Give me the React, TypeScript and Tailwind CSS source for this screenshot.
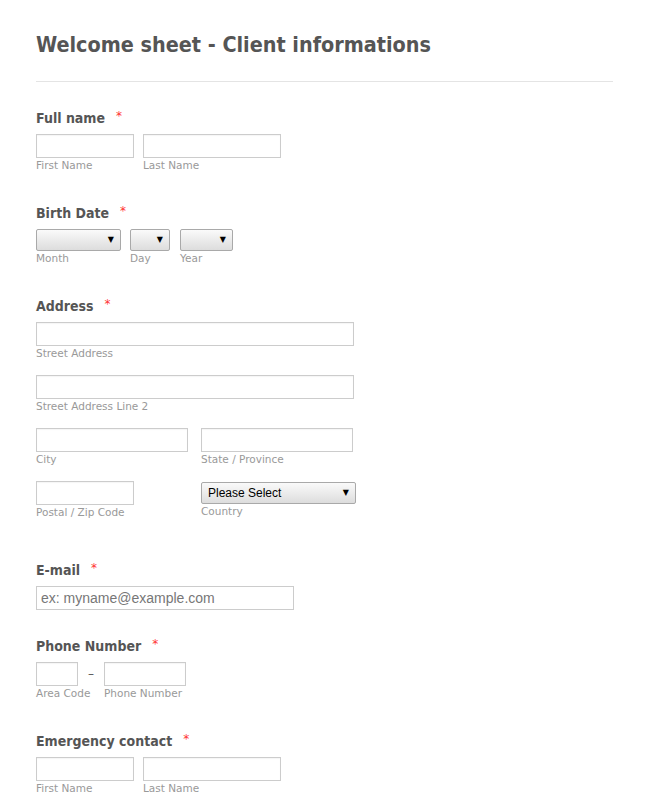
const font = { fontFamily: '"DejaVu Sans", "Lucida Grande", sans-serif' }
const cond = { fontFamily: '"DejaVu Sans Condensed", "DejaVu Sans", sans-serif' }

function Label({ text }: { text: string }) {
  return (
    <div className="flex items-center h-5 mb-1.5 text-[14px] font-bold text-[#555555]" style={cond}>
      <span>{text}</span>
      <span className="ml-[11px] text-[#ff3333] text-[12px] font-normal -mt-1" style={font}>*</span>
    </div>
  )
}

function Sub({ text }: { text: string }) {
  return <div className="h-3.5 leading-[14px] text-[10.5px] text-[#999999] whitespace-nowrap">{text}</div>
}

function Field({ w, sub }: { w: number; sub?: string }) {
  return (
    <div className="flex flex-col">
      <input
        className="h-6 border border-[#cccccc] bg-white shadow-[inset_0_1px_1px_rgba(0,0,0,0.04)] outline-none"
        style={{ width: w }}
      />
      {sub && <Sub text={sub} />}
    </div>
  )
}

function Select({ w, text, sub }: { w: number; text?: string; sub: string }) {
  return (
    <div className="flex flex-col">
      <div
        className="h-[22px] flex items-center justify-between pl-1.5 pr-1.5 border border-[#a9a9a9] rounded-[2px] bg-gradient-to-b from-[#fafafa] to-[#dddddd]"
        style={{ width: w }}
      >
        <span className="text-[12px] text-black" style={{ fontFamily: '"Liberation Sans", Arial, sans-serif' }}>
          {text}
        </span>
        <span className="text-[8px] text-black">▼</span>
      </div>
      <Sub text={sub} />
    </div>
  )
}

export default function App() {
  return (
    <div className="min-h-screen bg-white px-9 pt-[30px]" style={font}>
      <h1 className="text-[21.4px] leading-[30px] font-bold text-[#555555]" style={cond}>
        Welcome sheet - Client informations
      </h1>
      <div className="mt-[21px] h-px w-[577px] bg-[#e4e4e4]" />

      {/* Full name */}
      <div className="mt-[26px]">
        <Label text="Full name" />
        <div className="flex gap-[9px]">
          <Field w={98} sub="First Name" />
          <Field w={138} sub="Last Name" />
        </div>
      </div>

      {/* Birth date */}
      <div className="mt-[31px]">
        <Label text="Birth Date" />
        <div className="flex">
          <Select w={85} sub="Month" />
          <div className="ml-[9px]"><Select w={40} sub="Day" /></div>
          <div className="ml-[10px]"><Select w={53} sub="Year" /></div>
        </div>
      </div>

      {/* Address */}
      <div className="mt-[31px]">
        <Label text="Address" />
        <div className="flex flex-col gap-[15px]">
          <Field w={318} sub="Street Address" />
          <Field w={318} sub="Street Address Line 2" />
          <div className="flex gap-[13px]">
            <Field w={152} sub="City" />
            <Field w={152} sub="State / Province" />
          </div>
          <div className="flex items-start">
            <Field w={98} sub="Postal / Zip Code" />
            <div className="ml-[67px] mt-px">
              <Select w={155} text="Please Select" sub="Country" />
            </div>
          </div>
        </div>
      </div>

      {/* E-mail */}
      <div className="mt-[41px]">
        <Label text="E-mail" />
        <input
          placeholder="ex: myname@example.com"
          className="h-6 w-[258px] px-1 border border-[#cccccc] bg-white text-[14px] placeholder:text-[#777777] outline-none"
          style={{ fontFamily: '"Liberation Sans", Arial, sans-serif' }}
        />
      </div>

      {/* Phone */}
      <div className="mt-[26px]">
        <Label text="Phone Number" />
        <div className="flex items-start">
          <div className="w-[42px]">
            <Field w={42} sub="Area Code" />
          </div>
          <div className="w-[26px] h-6 flex items-center justify-center text-[#555555] text-[12px]">–</div>
          <Field w={82} sub="Phone Number" />
        </div>
      </div>

      {/* Emergency contact */}
      <div className="mt-[31px]">
        <Label text="Emergency contact" />
        <div className="flex gap-[9px]">
          <Field w={98} sub="First Name" />
          <Field w={138} sub="Last Name" />
        </div>
      </div>
    </div>
  )
}
